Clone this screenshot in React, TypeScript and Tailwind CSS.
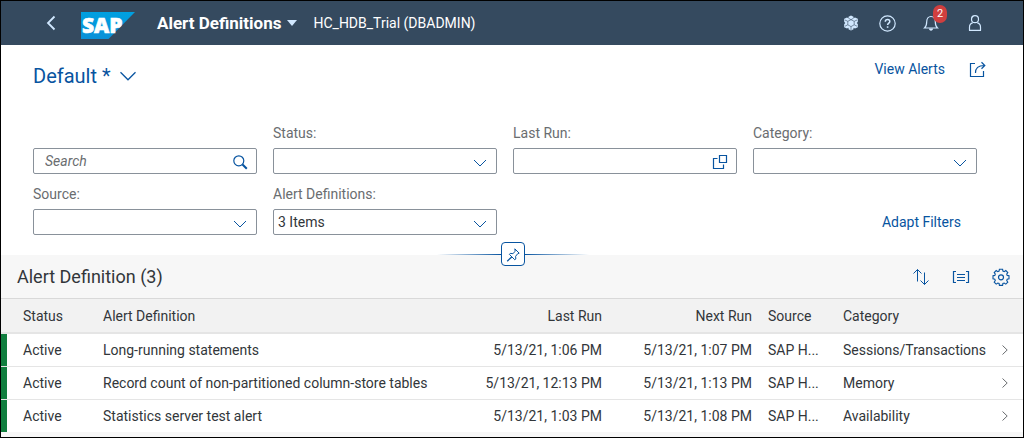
import type { ReactNode } from "react";

type IconProps = { className?: string; children: ReactNode; box?: string };

function Icon({ className = "size-4", children, box = "0 0 16 16" }: IconProps) {
  return (
    <svg viewBox={box} className={className} fill="none" stroke="currentColor" aria-hidden="true">
      {children}
    </svg>
  );
}

function ChevronDown({ className = "h-2 w-3.5" }: { className?: string }) {
  return (
    <Icon className={className} box="0 0 14 8">
      <path d="M1 1l6 6 6-6" strokeWidth="1" />
    </Icon>
  );
}

function SapLogo() {
  return (
    <svg viewBox="0 0 54 27" className="h-[27px] w-[54px]" role="img" aria-label="SAP">
      <defs>
        <linearGradient id="sap-blue" x1="0" y1="0" x2="0" y2="1">
          <stop offset="0" stopColor="#00a0e0" />
          <stop offset="1" stopColor="#0a90d8" />
        </linearGradient>
      </defs>
      <path d="M0 0h54L27.500 27H0z" fill="url(#sap-blue)" />
      <text x="1" y="21" fontSize="21" fontWeight="900" fill="#fff" stroke="#fff" strokeWidth=".6" fontFamily="'Open Sans', sans-serif">
        SAP
      </text>
    </svg>
  );
}

function CubeIcon() {
  return (
    <Icon>
      <path
        d="M8 .5l2.500 1.200v1.500l1.500-.7 2.800 1.300v3.200L13.600 8l1.200 1v3.200L12 13.500l-1.500-.7v1.500L8 15.500l-2.500-1.200v-1.500l-1.500.7-2.800-1.300V9L2.400 8 1.200 7V3.800L4 2.500l1.500.7V1.700z"
        fill="currentColor"
        stroke="none"
      />
      <path d="M8 4.700l3.200 1.600v3.500L8 11.600 4.800 9.800V6.300zM4.800 6.300L2 5M11.200 6.300L14 5M8 11.600V15M5.500 3.200L8 4.700l2.500-1.500M4.800 9.800L2 11.200M11.200 9.800l2.800 1.400" stroke="#354a5f" strokeWidth=".6" />
    </Icon>
  );
}

function HelpIcon() {
  return (
    <Icon className="size-[17px]" box="0 0 17 17">
      <circle cx="8.5" cy="8.5" r="7.700" strokeWidth="1.200" />
      <path d="M6.300 6.700C6.300 5.200 7.300 4.500 8.600 4.500s2.200.8 2.200 2c0 1.700-2.200 1.700-2.200 3.500" strokeWidth="1.500" />
      <path d="M7.800 11.300h1.600v1.500H7.800z" fill="currentColor" stroke="none" />
    </Icon>
  );
}

function BellIcon() {
  return (
    <Icon>
      <path d="M1.500 13c1.800-1.500 2.200-3 2.200-6.200C3.700 3.500 5.500 1.500 8 1.500s4.300 2 4.300 5.300c0 3.200.4 4.700 2.200 6.200z" strokeWidth="1.200" />
      <path d="M6 13.500h4c0 1.400-.8 2.200-2 2.200s-2-.8-2-2.200z" fill="currentColor" stroke="none" />
    </Icon>
  );
}

function UserIcon() {
  return (
    <Icon>
      <circle cx="8" cy="4.200" r="3.500" strokeWidth="1.200" />
      <path d="M2.500 15.400v-3.200c0-2.500 1.300-4 3.200-4.400M13.500 15.400v-3.200c0-2.500-1.300-4-3.200-4.400M2 15.400h12" strokeWidth="1.200" />
    </Icon>
  );
}

function ShareIcon() {
  return (
    <Icon className="size-[17px]" box="0 0 17 17">
      <path d="M6 2.500H1.500v13h13V10" strokeWidth="1.200" />
      <path d="M6.500 12C6.500 7 9 4.500 15.500 4.500M12.500 1.300l3.300 3.200-3.300 3.200" strokeWidth="1.200" />
    </Icon>
  );
}

function SearchIcon() {
  return (
    <Icon>
      <circle cx="6.800" cy="6.800" r="5" strokeWidth="1.200" />
      <path d="M10.500 10.500l4.300 4.300" strokeWidth="2" />
    </Icon>
  );
}

function ValueHelpIcon() {
  return (
    <Icon>
      <path d="M7.500 1.500h7v7h-7zM5.500 4.500h-4v10h10v-4" strokeWidth="1.200" />
    </Icon>
  );
}

function PinIcon() {
  return (
    <Icon>
      <path d="M9.800 1.800l4.400 4.400-1.600.6-2 2.500.2 2.700-1 .8-5.400-5.400.8-1 2.700.2 2.300-2.200z" />
      <path d="M7 9.800l-4.800 4.400" strokeWidth="1.300" />
    </Icon>
  );
}

function SortIcon() {
  return (
    <Icon className="size-[18px]" box="0 0 18 18">
      <path d="M5.500 13.500V1.500M1.500 5.500l4-4 4 4M12.500 4.500v12M8.500 12.500l4 4 4-4" strokeWidth="1" />
    </Icon>
  );
}

function GroupIcon() {
  return (
    <Icon className="size-[18px]" box="0 0 18 18">
      <path d="M4 3.500H1.500v11H4M14 3.500h2.500v11H14M5 6.500h8M5 9.500h8M5 12.500h8" strokeWidth="1.200" />
    </Icon>
  );
}

function GearIcon() {
  return (
    <Icon className="size-[18px]" box="0 0 18 18">
      <path
        d="M7.400 1.200h3.200l.3 1.900 1.300.5 1.600-1.100 2 2-1.100 1.600.5 1.300 1.800.3v3.200l-1.800.3-.5 1.300 1.100 1.600-2 2-1.600-1.100-1.300.5-.3 1.900H7.400l-.3-1.900-1.300-.5-1.600 1.100-2-2 1.100-1.600-.5-1.300L1 10.900V7.700l1.800-.3.500-1.300-1.100-1.600 2-2 1.600 1.100 1.300-.5z"
        strokeWidth="1.100"
      />
      <circle cx="9" cy="9.300" r="2.500" strokeWidth="1.200" />
    </Icon>
  );
}

function Field({ id, label, children }: { id: string; label: string; children: ReactNode }) {
  return (
    <div className="flex flex-col gap-[5px]">
      <label htmlFor={id} className="h-5 leading-5 text-[#6a6d70]">
        {label}
      </label>
      {children}
    </div>
  );
}

function SelectField({ id, label, value = "" }: { id: string; label: string; value?: string }) {
  return (
    <Field id={id} label={label}>
      <div className="relative h-[26px]">
        <select
          id={id}
          defaultValue={value}
          className="h-full w-full appearance-none rounded-xs border border-[#89919a] bg-white pr-8 pl-1"
        >
          <option value={value}>{value}</option>
        </select>
        <span className="pointer-events-none absolute inset-y-0 right-2.5 flex items-center pt-1 text-[#0854a0]">
          <ChevronDown />
        </span>
      </div>
    </Field>
  );
}

const inputBox = "flex h-[26px] items-center rounded-xs border border-[#89919a] bg-white";

const rows = [
  ["Active", "Long-running statements", "5/13/21, 1:06 PM", "5/13/21, 1:07 PM", "SAP H...", "Sessions/Transactions"],
  ["Active", "Record count of non-partitioned column-store tables", "5/13/21, 12:13 PM", "5/13/21, 1:13 PM", "SAP H...", "Memory"],
  ["Active", "Statistics server test alert", "5/13/21, 1:03 PM", "5/13/21, 1:08 PM", "SAP H...", "Availability"],
];

export default function App() {
  return (
    <div className="border border-black bg-[#f7f7f7] pb-[5px] font-['Roboto','Liberation_Sans',sans-serif] text-sm text-[#32363a]">
      <header className="flex h-11 items-center bg-[#354a5f] pr-[30px] pl-8 text-white">
        <button aria-label="Back" className="flex h-9 w-9 items-center justify-center text-[#d1e8ff]">
          <Icon className="h-4 w-2.5" box="0 0 10 16">
            <path d="M8.500 1.500L2 8l6.500 6.500" strokeWidth="1.800" />
          </Icon>
        </button>
        <a href="#home" className="ml-3 pt-1">
          <SapLogo />
        </a>
        <button className="ml-[22px] flex items-center gap-1.5 text-[17px] font-bold">
          Alert Definitions
          <svg viewBox="0 0 10 6" className="h-1.5 w-2.5" fill="#d1e8ff" aria-hidden="true">
            <path d="M0 0h10L5 6z" />
          </svg>
        </button>
        <span className="ml-4">HC_HDB_Trial (DBADMIN)</span>
        <div className="ml-auto flex gap-2 text-[#d1e8ff]">
          <div className="flex">
            <button aria-label="Products" className="flex size-9 items-center justify-center">
              <CubeIcon />
            </button>
            <button aria-label="Help" className="flex size-9 items-center justify-center">
              <HelpIcon />
            </button>
          </div>
          <button aria-label="Notifications" className="relative flex size-9 items-center justify-center">
            <BellIcon />
            <span className="absolute top-0 right-0.5 flex h-[18px] w-3.5 items-center justify-center rounded-full bg-[#d03f3f] text-[11px] text-white">
              2
            </span>
          </button>
          <button aria-label="User" className="flex size-9 items-center justify-center">
            <UserIcon />
          </button>
        </div>
      </header>

      <section className="relative bg-white pb-5 pl-8">
        <div className="flex h-[78px] items-start justify-between pr-[37px] text-[#0854a0]">
          <button className="mt-[17px] flex h-7 items-center gap-2 text-xl">
            Default *
            <ChevronDown className="h-2.5 w-[18px]" />
          </button>
          <div className="mt-3.5 flex h-5 items-center gap-6">
            <a href="#alerts">View Alerts</a>
            <button aria-label="Share">
              <ShareIcon />
            </button>
          </div>
        </div>

        <form className="grid grid-cols-4 items-end gap-x-4 gap-y-2.5 pr-[46px]">
          <div className={inputBox}>
            <input
              type="text"
              aria-label="Search"
              placeholder="Search"
              className="min-w-0 flex-1 pl-[11px] outline-none placeholder:text-[#6a6d70] placeholder:italic"
            />
            <button type="button" aria-label="Run search" className="px-2 pt-0.5 text-[#0854a0]">
              <SearchIcon />
            </button>
          </div>
          <SelectField id="status" label="Status:" />
          <Field id="last-run" label="Last Run:">
            <div className={inputBox}>
              <input id="last-run" type="text" className="min-w-0 flex-1 pl-1 outline-none" />
              <button type="button" aria-label="Choose dates" className="px-2 pt-0.5 text-[#0854a0]">
                <ValueHelpIcon />
              </button>
            </div>
          </Field>
          <SelectField id="category" label="Category:" />
          <SelectField id="source" label="Source:" />
          <SelectField id="definitions" label="Alert Definitions:" value="3 Items" />
          <div className="col-span-2 flex h-[26px] items-center justify-end pr-4">
            <button type="button" className="text-[#0854a0]">
              Adapt Filters
            </button>
          </div>
        </form>

        <div className="absolute inset-x-0 -bottom-[11px] z-10 flex items-center justify-center pl-0.5">
          <span className="h-px w-16 bg-linear-to-r from-[#0854a0]/0 to-[#0854a0]" />
          <button
            aria-label="Pin header"
            className="flex size-6 items-center justify-center rounded-sm border border-[#0854a0] bg-white pt-0.5 text-[#0854a0]"
          >
            <PinIcon />
          </button>
          <span className="h-px w-16 bg-linear-to-l from-[#0854a0]/0 to-[#0854a0]" />
        </div>
      </section>

      <section>
        <div className="flex h-[43px] items-center justify-between pr-1.5 pl-4">
          <h2 className="text-lg">Alert Definition (3)</h2>
          <div className="flex gap-2 text-[#0854a0]">
            <button aria-label="Sort" className="flex size-8 items-center justify-center">
              <SortIcon />
            </button>
            <button aria-label="Group" className="flex size-8 items-center justify-center">
              <GroupIcon />
            </button>
            <button aria-label="Settings" className="flex size-8 items-center justify-center">
              <GearIcon />
            </button>
          </div>
        </div>

        <table className="w-full table-fixed border-separate border-spacing-0 whitespace-nowrap">
          <colgroup>
            <col className="w-[94px]" />
            <col />
            <col className="w-[150px]" />
            <col className="w-[150px]" />
            <col className="w-[75px]" />
            <col className="w-[154px]" />
            <col className="w-[34px]" />
          </colgroup>
          <thead>
            <tr className="h-9 bg-[#f2f2f2] text-left *:border-t *:border-b-2 *:border-t-[#d9d9d9] *:border-b-[#e5e5e5] *:p-0 *:px-2 *:font-normal">
              <th>
                <span className="pl-3.5">Status</span>
              </th>
              <th>Alert Definition</th>
              <th className="text-right">Last Run</th>
              <th className="text-right">Next Run</th>
              <th>Source</th>
              <th>Category</th>
              <th aria-label="Details" />
            </tr>
          </thead>
          <tbody>
            {rows.map(([status, name, last, next, source, category]) => (
              <tr
                key={name}
                className="h-[33px] bg-white *:border-b *:border-[#e5e5e5] *:p-0 *:px-2 last:h-8 last:*:border-b-0"
              >
                <td className="bg-linear-to-r from-[#107e3e] from-[6px] to-transparent to-[6px] bg-origin-padding bg-clip-padding">
                  <span className="pl-3.5">{status}</span>
                </td>
                <td className="truncate">{name}</td>
                <td className="text-right">{last}</td>
                <td className="text-right">{next}</td>
                <td>{source}</td>
                <td>{category}</td>
                <td>
                  <button aria-label="Open details" className="flex h-5 w-4 items-center justify-center text-[#6a6d70]">
                    <Icon className="h-2.5 w-1.5" box="0 0 6 10">
                      <path d="M.5 .5L5.200 5 .5 9.500" strokeWidth="1" />
                    </Icon>
                  </button>
                </td>
              </tr>
            ))}
          </tbody>
        </table>
      </section>
    </div>
  );
}
